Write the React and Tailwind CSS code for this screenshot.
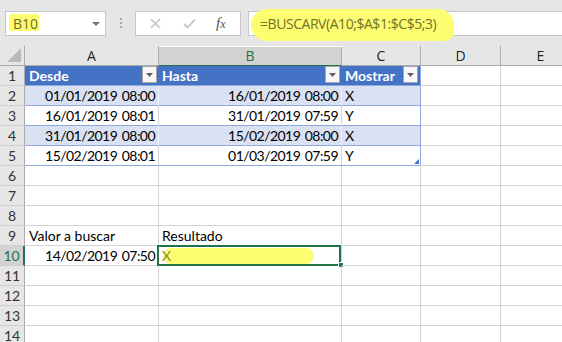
import React from "react";

const W = [134, 183, 79, 80, 80];
const LETTERS = ["A", "B", "C", "D", "E"];

const data = [
  ["01/01/2019 08:00", "16/01/2019 08:00", "X"],
  ["16/01/2019 08:01", "31/01/2019 07:59", "Y"],
  ["31/01/2019 08:00", "15/02/2019 08:00", "X"],
  ["15/02/2019 08:01", "01/03/2019 07:59", "Y"],
];

function FilterBtn() {
  return (
    <div className="ml-auto mr-[2px] flex h-[17px] w-[15px] shrink-0 items-center justify-center border border-[#a6a6a6] bg-[#f7f7f7]">
      <svg width="7" height="4" viewBox="0 0 7 4">
        <path d="M0 0 H7 L3.5 4 Z" fill="#5f5f5f" />
      </svg>
    </div>
  );
}

function RowHead({ n, sel }) {
  return (
    <div
      className={
        "flex h-[20px] w-[25px] shrink-0 items-end justify-center border-b border-[#d0d0d0] pb-[1px] text-[14px] leading-[17px] " +
        (sel
          ? "border-r-2 border-r-[#217346] bg-[#d2d2d2] text-[#217346]"
          : "border-r border-r-[#ababab] bg-[#e6e6e6] text-[#333]")
      }
    >
      {n}
    </div>
  );
}

function Cell({ w, children, className = "" }) {
  return (
    <div
      style={{ width: w }}
      className={"relative flex h-[20px] shrink-0 items-end overflow-visible whitespace-nowrap pb-[1px] text-[14px] leading-[17px] " + className}
    >
      {children}
    </div>
  );
}

const grid = "border-r border-b border-[#d4d4d4]";
const dateCls = "justify-end pr-[3px] text-[13.5px] tracking-[-0.55px] [word-spacing:1.5px]";

export default function App() {
  const rows = [];
  rows.push(
    <div key="r1" className="flex">
      <RowHead n={1} />
      <Cell w={W[0]} className="border-b border-[#8ea9db] bg-[#4472c4] pl-[4px] font-bold text-white">
        <span className="self-end">Desde</span>
        <div className="mb-[1px] ml-auto self-center"><FilterBtn /></div>
      </Cell>
      <Cell w={W[1]} className="border-b border-[#8ea9db] bg-[#4472c4] pl-[3px] font-bold text-white">
        <span className="self-end">Hasta</span>
        <div className="mb-[1px] ml-auto self-center"><FilterBtn /></div>
      </Cell>
      <Cell w={W[2]} className="border-b border-r border-[#8ea9db] bg-[#4472c4] pl-[3px] font-bold text-white">
        <span className="self-end">Mostrar</span>
        <div className="mb-[1px] ml-auto self-center"><FilterBtn /></div>
      </Cell>
      <Cell w={W[3]} className={grid} />
      <Cell w={W[4]} className={grid} />
    </div>
  );
  data.forEach((d, i) => {
    const band = i % 2 === 0;
    const bg = band ? "bg-[#d9e1f2]" : "bg-white";
    const vr = band ? "border-r-[#eef2fa]" : "border-r-[#d4d4d4]";
    const last = i === 3;
    rows.push(
      <div key={"d" + i} className="flex">
        <RowHead n={i + 2} />
        <Cell w={W[0]} className={`${bg} border-r ${vr} border-b border-b-[#8ea9db] ${dateCls}`}>
          {d[0]}
        </Cell>
        <Cell w={W[1]} className={`${bg} border-r ${vr} border-b border-b-[#8ea9db] ${dateCls}`}>
          {d[1]}
        </Cell>
        <Cell w={W[2]} className={`${bg} border-r border-r-[#8ea9db] border-b border-b-[#8ea9db] pl-[3px]`}>
          {d[2]}
          {last && (
            <svg className="absolute bottom-[1px] right-[1px]" width="5" height="5" viewBox="0 0 5 5">
              <path d="M5 0 V5 H0 Z" fill="#4472c4" />
            </svg>
          )}
        </Cell>
        <Cell w={W[3]} className={grid} />
        <Cell w={W[4]} className={grid} />
      </div>
    );
  });
  for (let r = 6; r <= 14; r++) {
    let a = null,
      b = null,
      aCls = "",
      bCls = "";
    if (r === 9) {
      a = "Valor a buscar";
      b = "Resultado";
      aCls = "pl-[4px] overflow-visible";
      bCls = "pl-[3px]";
    }
    if (r === 10) {
      a = "14/02/2019 07:50";
      aCls = dateCls;
    }
    rows.push(
      <div key={"r" + r} className="flex">
        <RowHead n={r} sel={r === 10} />
        <Cell w={W[0]} className={`${grid} ${aCls}`}>{a}</Cell>
        {r === 10 ? (
          <Cell w={W[1]} className={`${grid} pl-[3px]`}>
            <div className="absolute left-[4px] top-[2px] h-[16px] w-[151px] rounded-[8px] bg-[#fdfd72]" />
            <span className="relative text-[#8a8a2a]">X</span>
            <div className="absolute -left-[2px] -top-[1px] h-[21px] w-[184px] border-2 border-[#217346]" />
            <div className="absolute -bottom-[3px] -right-[3px] h-[6px] w-[6px] border border-white bg-[#217346]" />
          </Cell>
        ) : (
          <Cell w={W[1]} className={`${grid} ${bCls}`}>{b}</Cell>
        )}
        <Cell w={W[2]} className={grid} />
        <Cell w={W[3]} className={grid} />
        <Cell w={W[4]} className={grid} />
      </div>
    );
  }

  return (
    <div
      className="h-[342px] w-[562px] overflow-hidden bg-white text-black"
      style={{ fontFamily: "Lato, 'Noto Sans', sans-serif" }}
    >
      {/* toolbar */}
      <div
        className="flex h-[46px] items-start bg-[#e6e6e6] pt-[11px]"
        style={{ fontFamily: "'Open Sans', 'Noto Sans', sans-serif" }}
      >
        <div className="relative ml-[5px] flex h-[25px] w-[101px] items-center border border-[#c6c6c6] bg-white">
          <div className="absolute left-[3px] top-[2px] h-[17px] w-[30px] rounded-[2px] bg-[#fdfd72]" />
          <span className="relative ml-[7px] text-[14px] text-[#6f6f22]">B10</span>
          <svg className="ml-auto mr-[5px]" width="8" height="4" viewBox="0 0 8 4">
            <path d="M0 0 H8 L4 4 Z" fill="#6f6f6f" />
          </svg>
        </div>
        <div className="ml-[14px] mt-[7px] flex w-[3px] flex-col gap-[2px]">
          <div className="h-[2px] w-[2px] bg-[#a9a9a9]" />
          <div className="h-[2px] w-[2px] bg-[#a9a9a9]" />
          <div className="h-[2px] w-[2px] bg-[#a9a9a9]" />
        </div>
        <div className="ml-[12px] flex h-[25px] w-[106px] items-center border border-[#c6c6c6] bg-white">
          <svg className="ml-[14px]" width="11" height="11" viewBox="0 0 11 11">
            <path d="M1 1 L10 10 M10 1 L1 10" stroke="#c4c4c4" strokeWidth="1.6" />
          </svg>
          <svg className="ml-[22px]" width="13" height="11" viewBox="0 0 13 11">
            <path d="M1 6 L4.5 9.5 L12 1.5" stroke="#c4c4c4" strokeWidth="1.8" fill="none" />
          </svg>
          <span
            className="ml-[20px] text-[15px] italic text-[#555]"
            style={{ fontFamily: "'Liberation Serif', serif" }}
          >
            f<span className="text-[12px]">x</span>
          </span>
        </div>
        <div className="relative ml-[7px] flex h-[25px] flex-1 items-center border border-[#c6c6c6] border-r-0 bg-white">
          <div className="absolute left-[2px] top-[-3px] h-[32px] w-[203px] rounded-[16px] rounded-br-[10px] bg-[#fdfd72]" />
          <span className="relative ml-[11px] text-[14px] tracking-[-0.45px] text-[#727228]">
            =BUSCARV(A10;$A$1:$C$5;3)
          </span>
        </div>
      </div>
      {/* column header */}
      <div className="flex h-[20px]" style={{ fontFamily: "'Open Sans', 'Noto Sans', sans-serif" }}>
        <div className="relative h-[20px] w-[25px] shrink-0 border-r border-b border-[#ababab] bg-[#e6e6e6]">
          <svg className="absolute bottom-[3px] right-[3px]" width="14" height="14" viewBox="0 0 14 14">
            <path d="M14 0 V14 H0 Z" fill="#b9b9b9" />
          </svg>
        </div>
        {LETTERS.map((l, i) => (
          <div
            key={l}
            style={{ width: W[i] }}
            className={
              "flex h-[20px] shrink-0 items-end justify-center border-r text-[14px] leading-[18px] " +
              (l === "B"
                ? "mt-[1px] h-[19px] border-r-[#ababab] border-b-2 border-b-[#217346] bg-[#d2d2d2] text-[#217346]"
                : "border-r-[#ababab] border-b border-b-[#ababab] bg-[#e6e6e6] text-[#222]")
            }
          >
            {l}
          </div>
        ))}
      </div>
      {rows}
    </div>
  );
}
